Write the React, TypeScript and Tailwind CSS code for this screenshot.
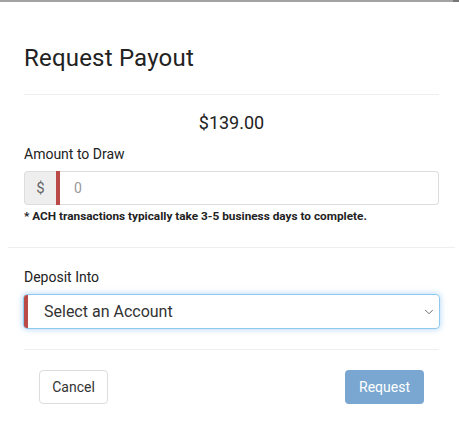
import { ChevronDown } from "lucide-react";

export default function App() {
  return (
    <div
      className="relative h-[425px] w-[459px] overflow-hidden bg-white text-[#222]"
      style={{ fontFamily: "Roboto, 'Liberation Sans', sans-serif" }}
    >
      {/* top edge */}
      <div className="flex h-[2px]">
        <div className="h-full w-[453px] bg-[#a3a3a3]" />
        <div className="h-full flex-1 bg-[#777]" />
      </div>

      {/* header */}
      <div className="ml-6 w-[415px] border-b border-[#eeeeee] pb-[21px] pt-[42px]">
        <h1 className="text-[24px] leading-[29px] font-normal tracking-[0.2px]">Request Payout</h1>
      </div>

      {/* amount */}
      <div className="ml-2 w-[447px] border-b border-[#efefef] px-4 pb-[23px]">
        <div className="pt-[17px] text-center text-[18px] leading-[22px]">$139.00</div>
        <div className="mt-[12px] text-[14px] leading-[17px]">Amount to Draw</div>
        <div className="mt-[8px] flex h-[34px] w-[415px]">
          <div className="flex w-[32px] items-center justify-center rounded-l-[4px] border border-r-0 border-[#dddddd] bg-[#eeeeee] text-[15px] text-[#666]">
            $
          </div>
          <div className="w-[4px] bg-[#b94a48]" />
          <div className="flex flex-1 items-center rounded-r-[4px] border border-l-0 border-[#dddddd] pl-[14px] text-[14px] text-[#999]">
            0
          </div>
        </div>
        <div className="mt-[4px] text-[11.8px] leading-[15px] font-bold">
          * ACH transactions typically take 3-5 business days to complete.
        </div>
      </div>

      {/* deposit */}
      <div className="ml-6 w-[415px] border-b border-[#efefef] pb-[20px]">
        <div className="pt-[21px] text-[14px] leading-[17px]">Deposit Into</div>
        <div className="ml-[-1px] mt-[8px] flex h-[35px] w-[417px] overflow-hidden rounded-[4px] border border-[#8fc9ee] shadow-[0_0_6px_rgba(102,175,233,0.55)]">
          <div className="w-[4px] bg-[#b94a48]" />
          <div className="flex flex-1 items-center justify-between pl-[16px] pr-[3px] text-[16px] text-[#333]">
            <span>Select an Account</span>
            <ChevronDown size={14} strokeWidth={1.5} className="text-[#555]" />
          </div>
        </div>
      </div>

      {/* footer */}
      <div className="ml-6 flex w-[415px] items-center justify-between pl-[15px] pr-[15px] pt-[20px]">
        <button className="h-[34px] w-[69px] rounded-[4px] border border-[#dddddd] bg-white text-[14px] text-[#333]">
          Cancel
        </button>
        <button className="h-[34px] w-[79px] rounded-[4px] bg-[#7aa7d1] text-[14px] text-white">
          Request
        </button>
      </div>
    </div>
  );
}
